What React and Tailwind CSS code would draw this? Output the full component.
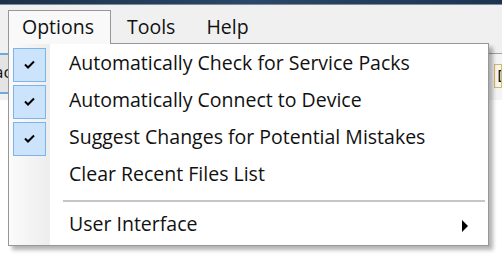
import React from "react";

const font = { fontFamily: '"Open Sans", "Noto Sans", sans-serif' };

const items = [
  { label: "Automatically Check for Service Packs", checked: true },
  { label: "Automatically Connect to Device", checked: true },
  { label: "Suggest Changes for Potential Mistakes", checked: true },
  { label: "Clear Recent Files List", checked: false },
];

function Check() {
  return (
    <div className="ml-[4px] flex h-[34px] w-[33px] items-center justify-center border border-[#7eb4ea] bg-[#cce4fb]">
      <svg width="11" height="9" viewBox="0 0 11 9">
        <path d="M1 4.5 L4 7.5 L10 1.5" fill="none" stroke="#000" strokeWidth="2" />
      </svg>
    </div>
  );
}

function MenuRow({ label, checked, submenu }) {
  return (
    <div className="flex h-[37px] items-center">
      <div className="flex w-[41px] shrink-0 items-center">{checked && <Check />}</div>
      <span className="ml-[19px] -mt-[3px] text-[19.5px] leading-none text-[#111]">{label}</span>
      {submenu && (
        <svg className="ml-auto mr-[20px]" width="6" height="12" viewBox="0 0 6 12">
          <path d="M0 0 L6 6 L0 12 Z" fill="#000" />
        </svg>
      )}
    </div>
  );
}

export default function App() {
  return (
    <div className="relative h-[276px] w-[502px] overflow-hidden bg-white" style={font}>
      <div className="h-[4px] bg-gradient-to-r from-[#1c3149] via-[#2a4868] to-[#1d3450]" />
      <div className="h-[1px] bg-[#7d8a97]" />
      <div className="flex h-[38px] items-end bg-[#f0f0f0] pl-[8px]">
        <div className="flex h-[33px] w-[103px] items-center border-x border-t border-[#979797] bg-[#f9f9f9] pl-[13px] text-[19.5px] text-[#111]">
          Options
        </div>
        <div className="flex h-[33px] items-center pl-[16px] text-[19.5px] text-[#111]">Tools</div>
        <div className="flex h-[33px] items-center pl-[31px] text-[19.5px] text-[#111]">Help</div>
      </div>
      <div className="flex h-[57px] justify-between bg-[#f0f0f0]">
        <div className="mt-[10px] h-[41px] w-[8px] overflow-hidden border-y-2 border-[#6fa8dc] bg-[#e4e4e4]">
          <span className="-ml-[6px] block pt-[8px] text-[17px] leading-none text-[#111]">ac</span>
        </div>
        <div className="mt-[10px] w-[14px] border-t border-[#a0a0a0] bg-[#f4f4f4]">
          <div className="ml-[6px] mt-[10px] h-[24px] overflow-hidden border border-[#d8b860] pl-[2px] text-[17px] leading-[22px] text-[#111]">
            D
          </div>
        </div>
      </div>

      <div className="absolute left-[8px] top-[43px] flex h-[203px] w-[481px] border border-[#979797] bg-white shadow-[4px_4px_4px_rgba(0,0,0,0.3)]">
        <div className="absolute bottom-0 left-0 top-0 w-[41px] bg-gradient-to-r from-[#fbfbfb] to-[#ededed]" />
        <div className="relative flex w-full flex-col pt-[2px]">
          {items.map((it) => (
            <MenuRow key={it.label} label={it.label} checked={it.checked} />
          ))}
          <div className="flex h-[13px] items-center pl-[54px] pr-[3px]">
            <div className="h-[2px] w-full bg-[#c6c6c6]" />
          </div>
          <MenuRow label="User Interface" submenu />
        </div>
      </div>
      <div className="absolute left-[9px] top-[43px] h-[1px] w-[101px] bg-[#f9f9f9]" />
    </div>
  );
}
